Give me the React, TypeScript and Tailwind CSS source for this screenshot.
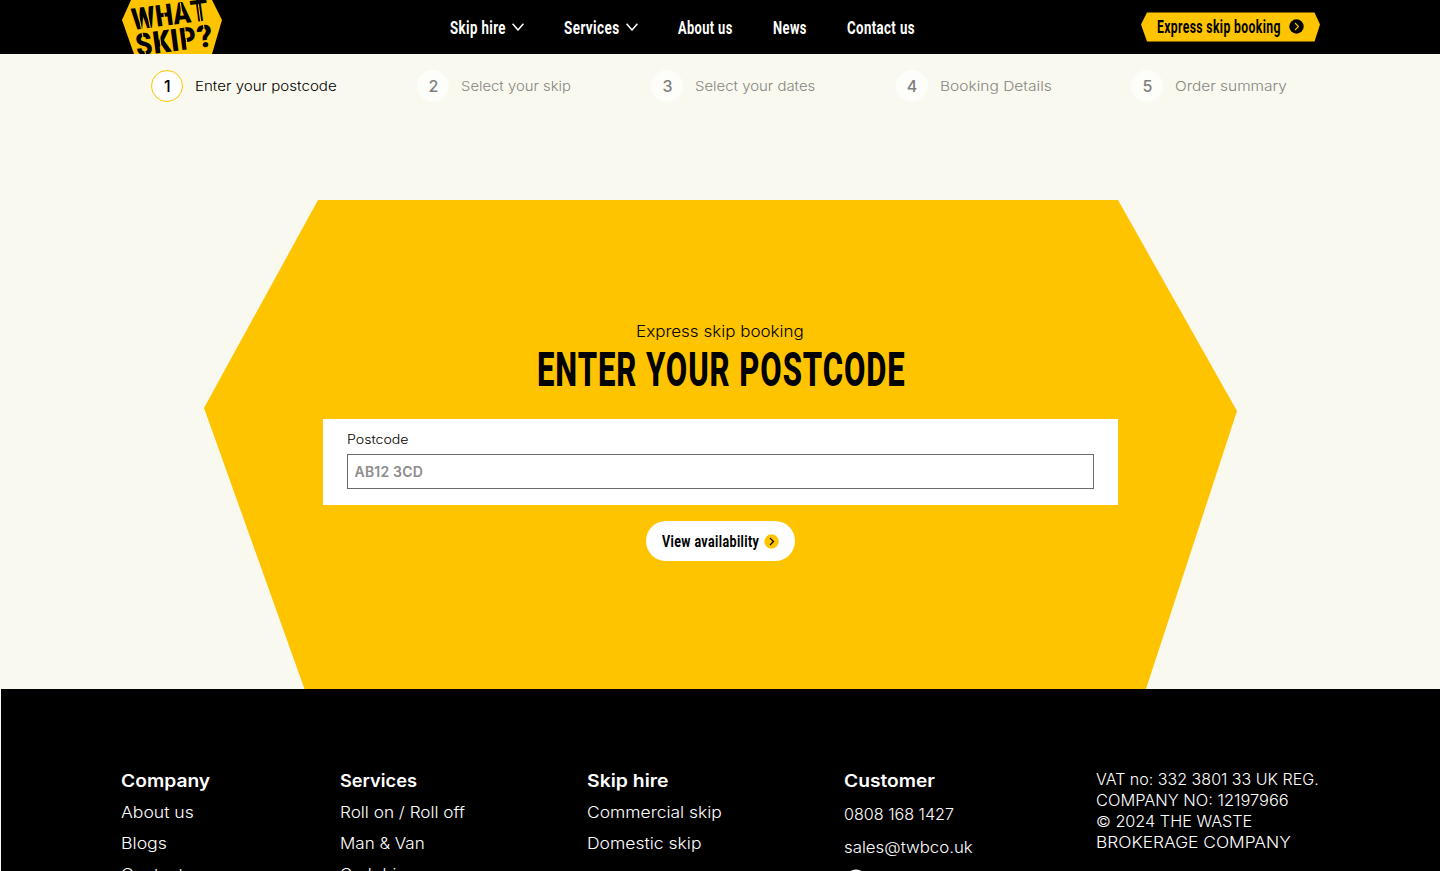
import { useLayoutEffect, useRef, useState } from "react";
import clsx from "clsx";

interface FitTextProps {
  text: string;
  width: number;
  className?: string;
}

// Stretches or condenses one line of text so that it fills the given width
function FitText({ text, width, className }: FitTextProps) {
  const ref = useRef<HTMLSpanElement>(null);
  const [scale, setScale] = useState(1);

  useLayoutEffect(() => {
    if (ref.current) setScale(width / ref.current.offsetWidth);
  }, [text, width]);

  return (
    <span className={clsx("flex items-center", className)} style={{ width }}>
      <span
        ref={ref}
        className="inline-block shrink-0 origin-left whitespace-nowrap"
        style={{ transform: `scaleX(${scale})` }}
      >
        {text}
      </span>
    </span>
  );
}

const navItems = [
  { label: "Skip hire", width: 56, menu: true },
  { label: "Services", width: 55.5, menu: true },
  { label: "About us", width: 55, menu: false },
  { label: "News", width: 34, menu: false },
  { label: "Contact us", width: 68, menu: false },
];

const steps = [
  { label: "Enter your postcode", width: 142 },
  { label: "Select your skip", width: 110 },
  { label: "Select your dates", width: 120.5 },
  { label: "Booking Details", width: 111.5 },
  { label: "Order summary", width: 112 },
];

const footerColumns = [
  {
    title: "Company",
    titleWidth: 89,
    className: "w-[219px]",
    links: [
      { label: "About us", width: 73 },
      { label: "Blogs", width: 46 },
      { label: "Contact", width: 63 },
    ],
  },
  {
    title: "Services",
    titleWidth: 77,
    className: "w-[247px]",
    links: [
      { label: "Roll on / Roll off", width: 125 },
      { label: "Man & Van", width: 85 },
      { label: "Grab hire", width: 72 },
    ],
  },
  {
    title: "Skip hire",
    titleWidth: 81,
    className: "w-[257px]",
    links: [
      { label: "Commercial skip", width: 135 },
      { label: "Domestic skip", width: 115 },
    ],
  },
];

const companyLines = [
  { text: "VAT no: 332 3801 33 UK REG.", width: 223 },
  { text: "COMPANY NO: 12197966", width: 193 },
  { text: "© 2024 THE WASTE", width: 156 },
  { text: "BROKERAGE COMPANY", width: 195 },
];

const logoTop = [
  { char: "W", x: 0, width: 24 },
  { char: "H", x: 24, width: 18 },
  { char: "A", x: 41.5, width: 18 },
  { char: "T", x: 59.5, width: 18 },
];

const logoBottom = [
  { char: "S", x: 0, width: 17 },
  { char: "K", x: 17.5, width: 18 },
  { char: "I", x: 35, width: 9 },
  { char: "P", x: 44.5, width: 17 },
  { char: "?", x: 62, width: 16 },
];

function Logo() {
  return (
    <svg width="100" height="54" viewBox="0 0 100 54" aria-label="What Skip?">
      <path d="M9 0H90L100 20L90 54H12L0 20Z" fill="#ffc400" />
      <g fontFamily="Roboto, sans-serif" fontWeight="900" strokeWidth="1.1" stroke="#ffc400">
        <g transform="translate(11 30) rotate(-7.5)" fontSize="30">
          {logoTop.map((l) => (
            <text key={l.char} x={l.x} y="0" textLength={l.width} lengthAdjust="spacingAndGlyphs" fill="#000" stroke="none">
              {l.char}
            </text>
          ))}
          {/* stencil bridges */}
          <path d="M7 -21L8.5 0M16 -21L17.5 0M32.8 -12.5V-7M50.5 -21V-8M68.2 -17V0" />
        </g>
        <g transform="translate(15 56) rotate(-7.5)" fontSize="31">
          {logoBottom.map((l) => (
            <text key={l.char} x={l.x} y="0" textLength={l.width} lengthAdjust="spacingAndGlyphs" fill="#000" stroke="none">
              {l.char}
            </text>
          ))}
          <path d="M8 -23L8.5 -16M8 -7L9 1M25 -22V0M51 -22V0M70 -23V-16" />
        </g>
      </g>
    </svg>
  );
}

function Header() {
  return (
    <header className="flex h-[54px] bg-black pr-[120px] pl-[122px] font-['Roboto',sans-serif] text-[17.5px] leading-6 font-bold tracking-[0.03em] text-white">
      <div className="w-[328px]">
        <Logo />
      </div>
      <nav className="flex flex-1 items-center gap-10 pt-px">
        {navItems.map((item) => (
          <a key={item.label} className="flex items-center gap-1.5">
            <FitText text={item.label} width={item.width} />
            {item.menu && (
              <svg width="12" height="8" viewBox="0 0 12 8" fill="none" className="mb-px">
                <path d="M0.6 0.8L6 7L11.4 0.8" stroke="#fff" strokeWidth="1.5" />
              </svg>
            )}
          </a>
        ))}
      </nav>
      <button className="mt-3 flex h-[30px] w-[179px] items-center gap-2 bg-[#ffc400] pl-4 text-black [clip-path:polygon(6px_0.5px,173.5px_0.5px,179px_12.5px,173.5px_29.5px,6px_29.5px,0_12.5px)]">
        <FitText text="Express skip booking" width={124} />
        <svg width="15" height="15" viewBox="0 0 15 15" fill="none" className="mb-px">
          <circle cx="7.5" cy="7.5" r="7.2" fill="#000" />
          <path d="M6 4L9.5 7.5L6 11" stroke="#ffc400" strokeWidth="1.1" />
        </svg>
      </button>
    </header>
  );
}

function Steps() {
  return (
    <ol className="flex h-16 items-center gap-20 pl-[151.4px] text-[13.5px] font-[350]">
      {steps.map((step, i) => (
        <li key={step.label} className="flex items-center gap-3">
          <span
            className={clsx(
              "flex size-8 items-center justify-center rounded-full text-base font-medium",
              i === 0 ? "border border-[#ffc400] bg-white text-black" : "bg-[#fdfdf9] text-[#7f7f7b]",
            )}
          >
            {i + 1}
          </span>
          <FitText
            text={step.label}
            width={step.width}
            className={i === 0 ? "text-black" : "text-[#868682]"}
          />
        </li>
      ))}
    </ol>
  );
}

function PostcodeForm() {
  return (
    <main className="flex h-[571px] flex-col items-center pt-[82px]">
      <form className="flex h-[489px] w-[1034px] flex-col items-center bg-[#ffc400] pt-[121px] [clip-path:polygon(115px_0,915px_0,1034px_211px,943px_489px,101.5px_489px,1px_208px)]">
        <FitText text="Express skip booking" width={168} className="h-[21px] text-[15.4px] font-[350]" />
        <h1 className="pl-0.5 font-['Roboto',sans-serif] text-[47.5px] leading-[57px] font-extrabold tracking-[0.03em]">
          <FitText text="ENTER YOUR POSTCODE" width={369} />
        </h1>
        <div className="mt-5 h-[86px] w-[795px] bg-white px-6 pt-[11px]">
          <label htmlFor="postcode" className="block text-[12.5px] leading-[19px] font-[350]">
            <FitText text="Postcode" width={61} />
          </label>
          <input
            id="postcode"
            placeholder="AB12 3CD"
            className="mt-[5px] block h-[35px] w-full border border-[#6b6b6b] px-[7px] text-[14px] font-semibold tracking-[0.2px] placeholder:text-[#8c8c8c]"
          />
        </div>
        <button className="mt-4 flex h-10 w-[149px] items-center gap-[5.5px] rounded-full bg-white pl-4 font-['Roboto',sans-serif] text-[16.5px] font-bold tracking-[0.03em]">
          <FitText text="View availability" width={97} className="pt-0.5" />
          <svg width="15" height="15" viewBox="0 0 15 15" fill="none">
            <circle cx="7.5" cy="7.5" r="7.2" fill="#ffc400" />
            <path d="M6 4L9.5 7.5L6 11" stroke="#000" strokeWidth="1.2" />
          </svg>
        </button>
      </form>
    </main>
  );
}

function Footer() {
  return (
    <footer className="ml-px flex h-[300px] bg-black pt-[76px] pl-[120px] text-[15.4px] font-[350] text-white">
      {footerColumns.map((column) => (
        <div key={column.title} className={column.className}>
          <h2 className="h-8 text-[17.5px] leading-8 font-semibold">
            <FitText text={column.title} width={column.titleWidth} />
          </h2>
          <ul>
            {column.links.map((link) => (
              <li key={link.label} className="h-[31px] leading-[31px]">
                <FitText text={link.label} width={link.width} />
              </li>
            ))}
          </ul>
        </div>
      ))}
      <div className="w-[252px]">
        <h2 className="h-8 text-[17.5px] leading-8 font-semibold">
          <FitText text="Customer" width={91} />
        </h2>
        <FitText text="0808 168 1427" width={110} className="h-9" />
        <FitText text="sales@twbco.uk" width={129} className="h-[30px]" />
        <svg width="24" height="24" viewBox="0 0 24 24" className="mt-[6px]">
          <circle cx="12" cy="12" r="11.5" fill="#fff" />
        </svg>
      </div>
      <div className="pt-1 leading-[21px]">
        {companyLines.map((line) => (
          <FitText key={line.text} text={line.text} width={line.width} />
        ))}
      </div>
    </footer>
  );
}

export default function App() {
  return (
    <div className="h-[871px] w-[1440px] overflow-hidden bg-[#f9f9ef] font-['Inter',sans-serif] text-black">
      <Header />
      <Steps />
      <PostcodeForm />
      <Footer />
    </div>
  );
}
